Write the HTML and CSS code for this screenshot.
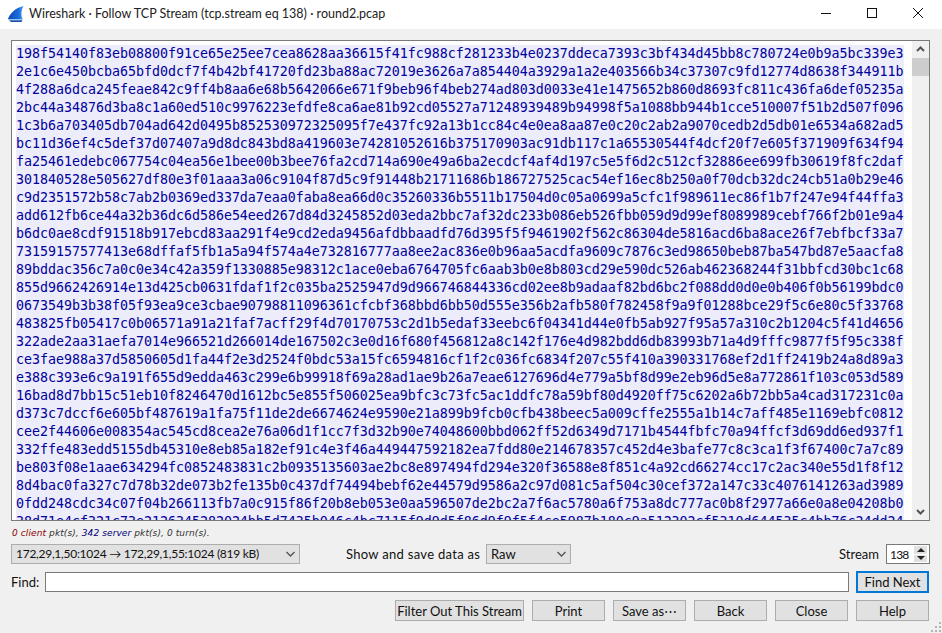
FILE: index.html
```html
<!DOCTYPE html>
<html lang="en">
<head>
<meta charset="utf-8">
<title>Wireshark · Follow TCP Stream</title>
<link rel="stylesheet" href="styles.css">
</head>
<body>
<div class="window">
  <header class="titlebar">
    <svg class="logo" width="16" height="16" viewBox="0 0 16 16"><defs><linearGradient id="fin" x1="0" y1="0" x2="1" y2="0"><stop offset="0" stop-color="#0a45b8"/><stop offset="0.7" stop-color="#1a6fdc"/><stop offset="1" stop-color="#5aa6ee"/></linearGradient></defs><path d="M0 13C2 7.500 7 2 15.500 0C13 4.500 12.800 9 14.500 13Z" fill="url(#fin)"/><path d="M0 13H14.500L15 14H0Z" fill="#9cc2ee"/><path d="M1 14.200H14.500L13.500 16H3Z" fill="#1450a8"/></svg>
    <span class="title">Wireshark · Follow TCP Stream (tcp.stream eq 138) · round2.pcap</span>
    <div class="winctl">
      <svg width="12" height="12" viewBox="0 0 12 12"><path d="M1 6.500H11" stroke="#111" fill="none"/></svg>
      <svg width="12" height="12" viewBox="0 0 12 12"><rect x="1.500" y="1.500" width="9" height="9" stroke="#111" fill="none"/></svg>
      <svg width="12" height="12" viewBox="0 0 12 12"><path d="M1 1L11 11M11 1L1 11" stroke="#111" fill="none"/></svg>
    </div>
  </header>
  <main class="content">
    <section class="stream">
      <div class="viewport"><pre class="data">198f54140f83eb08800f91ce65e25ee7cea8628aa36615f41fc988cf281233b4e0237ddeca7393c3bf434d45bb8c780724e0b9a5bc339e3
2e1c6e450bcba65bfd0dcf7f4b42bf41720fd23ba88ac72019e3626a7a854404a3929a1a2e403566b34c37307c9fd12774d8638f344911b
4f288a6dca245feae842c9ff4b8aa6e68b5642066e671f9beb96f4beb274ad803d0033e41e1475652b860d8693fc811c436fa6def05235a
2bc44a34876d3ba8c1a60ed510c9976223efdfe8ca6ae81b92cd05527a71248939489b94998f5a1088bb944b1cce510007f51b2d507f096
1c3b6a703405db704ad642d0495b852530972325095f7e437fc92a13b1cc84c4e0ea8aa87e0c20c2ab2a9070cedb2d5db01e6534a682ad5
bc11d36ef4c5def37d07407a9d8dc843bd8a419603e74281052616b375170903ac91db117c1a65530544f4dcf20f7e605f371909f634f94
fa25461edebc067754c04ea56e1bee00b3bee76fa2cd714a690e49a6ba2ecdcf4af4d197c5e5f6d2c512cf32886ee699fb30619f8fc2daf
301840528e505627df80e3f01aaa3a06c9104f87d5c9f91448b21711686b186727525cac54ef16ec8b250a0f70dcb32dc24cb51a0b29e46
c9d2351572b58c7ab2b0369ed337da7eaa0faba8ea66d0c35260336b5511b17504d0c05a0699a5cfc1f989611ec86f1b7f247e94f44ffa3
add612fb6ce44a32b36dc6d586e54eed267d84d3245852d03eda2bbc7af32dc233b086eb526fbb059d9d99ef8089989cebf766f2b01e9a4
b6dc0ae8cdf91518b917ebcd83aa291f4e9cd2eda9456afdbbaadfd76d395f5f9461902f562c86304de5816acd6ba8ace26f7ebfbcf33a7
73159157577413e68dffaf5fb1a5a94f574a4e732816777aa8ee2ac836e0b96aa5acdfa9609c7876c3ed98650beb87ba547bd87e5aacfa8
89bddac356c7a0c0e34c42a359f1330885e98312c1ace0eba6764705fc6aab3b0e8b803cd29e590dc526ab462368244f31bbfcd30bc1c68
855d9662426914e13d425cb0631fdaf1f2c035ba2525947d9d966746844336cd02ee8b9adaaf82bd6bc2f088dd0d0e0b406f0b56199bdc0
0673549b3b38f05f93ea9ce3cbae90798811096361cfcbf368bbd6bb50d555e356b2afb580f782458f9a9f01288bce29f5c6e80c5f33768
483825fb05417c0b06571a91a21faf7acff29f4d70170753c2d1b5edaf33eebc6f04341d44e0fb5ab927f95a57a310c2b1204c5f41d4656
322ade2aa31aefa7014e966521d266014de167502c3e0d16f680f456812a8c142f176e4d982bdd6db83993b71a4d9fffc9877f5f95c338f
ce3fae988a37d5850605d1fa44f2e3d2524f0bdc53a15fc6594816cf1f2c036fc6834f207c55f410a390331768ef2d1ff2419b24a8d89a3
e388c393e6c9a191f655d9edda463c299e6b99918f69a28ad1ae9b26a7eae6127696d4e779a5bf8d99e2eb96d5e8a772861f103c053d589
16bad8d7bb15c51eb10f8246470d1612bc5e855f506025ea9bfc3c73fc5ac1ddfc78a59bf80d4920ff75c6202a6b72bb5a4cad317231c0a
d373c7dccf6e605bf487619a1fa75f11de2de6674624e9590e21a899b9fcb0cfb438beec5a009cffe2555a1b14c7aff485e1169ebfc0812
cee2f44606e008354ac545cd8cea2e76a06d1f1cc7f3d32b90e74048600bbd062ff52d6349d7171b4544fbfc70a94ffcf3d69dd6ed937f1
332ffe483edd5155db45310e8eb85a182ef91c4e3f46a449447592182ea7fdd80e214678357c452d4e3bafe77c8c3ca1f3f67400c7a7c89
be803f08e1aae634294fc0852483831c2b0935135603ae2bc8e897494fd294e320f36588e8f851c4a92cd66274cc17c2ac340e55d1f8f12
8d4bac0fa327c7d78b32de073b2fe135b0c437df74494bebf62e44579d9586a2c97d081c5af504c30cef372a147c33c4076141263ad3989
0fdd248cdc34c07f04b266113fb7a0c915f86f20b8eb053e0aa596507de2bc2a7f6ac5780a6f753a8dc777ac0b8f2977a66e0a8e04208b0
38d71e4cf321c73e2126345282024bb5d7435b046c4bc7115f9d9d5f86d9f9f5f4ce5987b180c9a512302cf5310d644535c4bb76c24dd24</pre></div>
      <div class="scrollbar">
        <svg class="arrow" width="17" height="17" viewBox="0 0 17 17"><path d="M5 10L8.500 6.500L12 10" stroke="#555" stroke-width="2" fill="none"/></svg>
        <div class="track"><div class="thumb"></div></div>
        <svg class="arrow" width="17" height="17" viewBox="0 0 17 17"><path d="M5 7L8.500 10.500L12 7" stroke="#555" stroke-width="2" fill="none"/></svg>
      </div>
    </section>
    <p class="hint"><span class="client">0 client</span> pkt(s), <span class="server">342 server</span> pkt(s), 0 turn(s).</p>
    <div class="row controls">
      <div class="combo combo-stream"><span>172,29,1,50:1024 → 172,29,1,55:1024 (819 kB)</span><svg width="9" height="6" viewBox="0 0 9 6"><path d="M0.500 1L4.500 5L8.500 1" stroke="#555" stroke-width="1.400" fill="none"/></svg></div>
      <label class="show-label">Show and save data as</label>
      <div class="combo combo-raw"><span>Raw</span><svg width="9" height="6" viewBox="0 0 9 6"><path d="M0.500 1L4.500 5L8.500 1" stroke="#555" stroke-width="1.400" fill="none"/></svg></div>
      <label class="stream-label">Stream</label>
      <div class="spin"><span class="spin-value">138</span><div class="spin-btns"><div class="spin-btn"><i class="up"></i></div><div class="spin-btn"><i class="down"></i></div></div></div>
    </div>
    <div class="row find">
      <label>Find:</label>
      <div class="find-input"></div>
      <button class="btn btn-default">Find Next</button>
    </div>
    <div class="row actions">
      <button class="btn btn-filter">Filter Out This Stream</button>
      <button class="btn">Print</button>
      <button class="btn">Save as⋯</button>
      <button class="btn">Back</button>
      <button class="btn">Close</button>
      <button class="btn">Help</button>
    </div>
  </main>
  <svg class="grip" width="12" height="12" viewBox="0 0 12 12"><g fill="#b4b4b4"><rect x="9" y="1" width="2" height="2"/><rect x="5" y="5" width="2" height="2"/><rect x="9" y="5" width="2" height="2"/><rect x="1" y="9" width="2" height="2"/><rect x="5" y="9" width="2" height="2"/><rect x="9" y="9" width="2" height="2"/></g></svg>
</div>
</body>
</html>
```
FILE: styles.css
```css
* { box-sizing: border-box; }
html, body { margin: 0; padding: 0; }
body { width: 942px; height: 633px; overflow: hidden; background: #f0f0f0; font-family: Lato, "Noto Sans", sans-serif; font-size: 13px; color: #111; }
.window { position: relative; width: 942px; height: 633px; display: flex; flex-direction: column; }
.titlebar { height: 29px; background: #fff; display: flex; align-items: center; padding-left: 8px; flex: none; }
.logo { flex: none; margin-top: -1px; }
.title { margin: 0 0 3px 5px; font-size: 12.5px; color: #222; white-space: nowrap; }
.winctl { margin: 0 0 3px auto; display: flex; gap: 34px; padding-right: 18px; align-items: center; }
.content { flex: 1; display: flex; flex-direction: column; padding: 11px 12px 0 11px; min-height: 0; }
.stream { height: 481px; flex: none; border: 1px solid #7a7a7a; background: #fff; display: flex; justify-content: space-between; }
.viewport { flex: none; width: 893px; height: 479px; padding: 4px 0 0 4px; overflow: hidden; }
.data { margin: 0; width: 888px; background: #ececfb; color: #00009a; font-family: "DejaVu Sans Mono", monospace; font-size: 13.3px; letter-spacing: -0.01px; line-height: 18px; white-space: pre; overflow: hidden; }
.scrollbar { width: 17px; background: #f0f0f0; display: flex; flex-direction: column; flex: none; }
.arrow { flex: none; }
.track { flex: 1; }
.thumb { height: 18px; background: #cdcdcd; }
.hint { margin: 0; height: 23px; padding: 5px 0 0 1px; font-family: "DejaVu Sans", sans-serif; font-size: 9px; letter-spacing: 0.1px; line-height: 14px; font-style: italic; color: #333; white-space: nowrap; }
.client { color: #8b0000; }
.server { color: #000080; }
.row { display: flex; align-items: center; flex: none; }
.controls { height: 20px; }
.combo { height: 20px; background: #e1e1e1; border: 1px solid #adadad; display: flex; align-items: center; justify-content: space-between; padding: 0 4px; white-space: nowrap; line-height: 18px; }
.combo-stream { width: 289px; font-size: 12px; letter-spacing: -0.27px; }
.combo-raw { width: 85px; margin-left: 6px; }
.show-label { margin-left: 46px; width: 134px; white-space: nowrap; letter-spacing: 0.3px; }
.stream-label { margin-left: auto; margin-right: 7px; }
.spin { width: 44px; height: 20px; background: #fff; border: 1px solid #7a7a7a; display: flex; align-items: center; justify-content: space-between; padding: 0 2px 0 3px; }
.spin-value { font-size: 12px; letter-spacing: -0.8px; }
.spin-btns { width: 13px; height: 16px; display: flex; flex-direction: column; gap: 1px; }
.spin-btn { flex: 1; background: #e1e1e1; display: flex; align-items: center; justify-content: center; }
.spin-btn i { display: block; width: 0; height: 0; border-left: 4px solid transparent; border-right: 4px solid transparent; }
.spin-btn .up { border-bottom: 4px solid #222; }
.spin-btn .down { border-top: 4px solid #222; }
.find { height: 21px; margin-top: 7px; }
.find label { width: 34px; flex: none; }
.find-input { width: 804px; height: 20px; background: #fff; border: 1px solid #7a7a7a; flex: none; }
.btn { width: 73px; height: 21px; margin: 0; padding: 0; background: #e1e1e1; border: 1px solid #adadad; font: inherit; color: #111; white-space: nowrap; line-height: 18px; }
.btn-default { height: 22px; margin-left: 7px; border: 2px solid #0078d7; }
.actions { margin: 8px 1px 0 0; gap: 8px; justify-content: flex-end; }
.btn-filter { width: 129px; }
.grip { position: absolute; right: 0; bottom: 0; }
```
